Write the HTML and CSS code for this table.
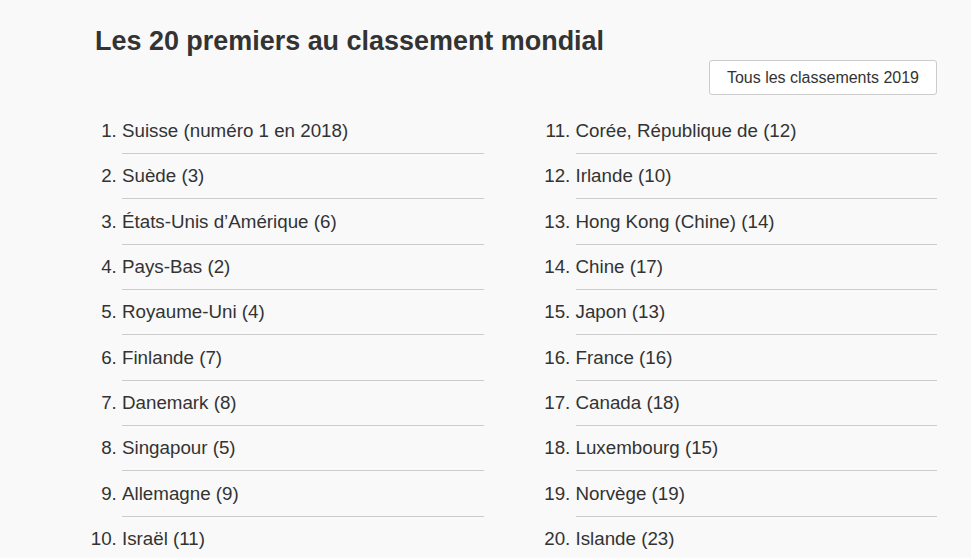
FILE: index.html
```html
<!DOCTYPE html>
<html lang="fr">
<head>
<meta charset="utf-8">
<title>Les 20 premiers au classement mondial</title>
<link rel="stylesheet" href="styles.css">
</head>
<body>
<div class="page">
  <h1 class="title">Les 20 premiers au classement mondial</h1>
  <div class="actions">
    <a class="btn" href="#">Tous les classements 2019</a>
  </div>
  <div class="columns">
    <ol class="rank-list">
      <li>Suisse (numéro 1 en 2018)</li>
      <li>Suède (3)</li>
      <li>États-Unis d’Amérique (6)</li>
      <li>Pays-Bas (2)</li>
      <li>Royaume-Uni (4)</li>
      <li>Finlande (7)</li>
      <li>Danemark (8)</li>
      <li>Singapour (5)</li>
      <li>Allemagne (9)</li>
      <li>Israël (11)</li>
    </ol>
    <ol class="rank-list" start="11">
      <li>Corée, République de (12)</li>
      <li>Irlande (10)</li>
      <li>Hong Kong (Chine) (14)</li>
      <li>Chine (17)</li>
      <li>Japon (13)</li>
      <li>France (16)</li>
      <li>Canada (18)</li>
      <li>Luxembourg (15)</li>
      <li>Norvège (19)</li>
      <li>Islande (23)</li>
    </ol>
  </div>
</div>
</body>
</html>
```

FILE: styles.css
```css
html, body {
  margin: 0;
  padding: 0;
  background: #f9f9f9;
}

body {
  font-family: "Liberation Sans", Arial, Helvetica, sans-serif;
  color: #333333;
}

.page {
  padding: 25px 34px 0 95px;
}

.title {
  margin: 0;
  font-size: 26.95px;
  line-height: 32px;
  font-weight: bold;
  color: #333333;
}

.actions {
  display: flex;
  justify-content: flex-end;
  margin-top: 3px;
}

.btn {
  display: flex;
  align-items: center;
  justify-content: center;
  box-sizing: border-box;
  height: 35px;
  padding: 0 17px;
  background: #ffffff;
  border: 1px solid #cccccc;
  border-radius: 3px;
  font-size: 16px;
  color: #333333;
  text-decoration: none;
}

.columns {
  display: grid;
  grid-template-columns: 1fr 1fr;
  column-gap: 65px;
  margin-top: 13.6px;
}

.rank-list {
  margin: 0;
  padding: 0 0 0 27px;
  list-style: decimal outside;
}

.rank-list li {
  font-size: 18.75px;
  line-height: 26px;
  padding: 9.33px 0 9px 0;
  border-bottom: 1px solid #cccccc;
}

.rank-list li:last-child {
  border-bottom: none;
}
```
